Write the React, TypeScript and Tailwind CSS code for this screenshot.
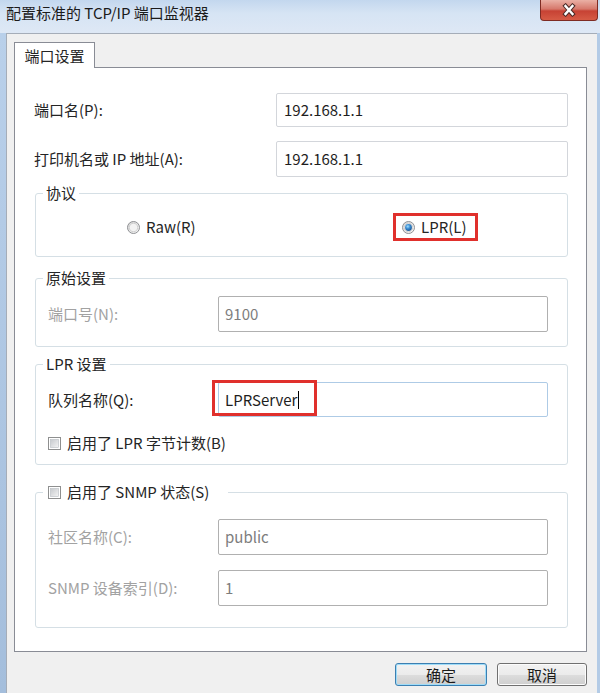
import React from 'react';

type Tone = 'normal' | 'disabled' | 'focus';

const Radio: React.FC<{ checked?: boolean; id: string }> = ({ checked, id }) => (
  <svg width="13" height="13" viewBox="0 0 13 13" className="shrink-0">
    <defs>
      <linearGradient id={`${id}-ring`} x1="0" y1="0" x2="1" y2="1">
        <stop offset="0" stopColor="#d4d4d4" />
        <stop offset="1" stopColor="#fafafa" />
      </linearGradient>
      <radialGradient id={`${id}-dot`} cx="0.4" cy="0.35" r="0.7">
        <stop offset="0" stopColor="#9fe0ff" />
        <stop offset="0.45" stopColor="#3d8fd4" />
        <stop offset="1" stopColor="#16508f" />
      </radialGradient>
    </defs>
    <circle cx="6.5" cy="6.5" r="6" fill={`url(#${id}-ring)`} stroke="#8f9194" />
    <circle cx="6.5" cy="6.5" r="4.2" fill="#f3f3f3" stroke="#c9c9c9" strokeWidth="0.8" />
    {checked && <circle cx="6.5" cy="6.5" r="3.4" fill={`url(#${id}-dot)`} />}
  </svg>
);

const Checkbox: React.FC<{ id: string }> = ({ id }) => (
  <svg width="13" height="13" viewBox="0 0 13 13" className="shrink-0">
    <defs>
      <linearGradient id={id} x1="0" y1="0" x2="1" y2="1">
        <stop offset="0" stopColor="#c6c9cd" />
        <stop offset="1" stopColor="#f4f4f4" />
      </linearGradient>
    </defs>
    <rect x="0.5" y="0.5" width="12" height="12" fill="#ffffff" stroke="#8e8f8f" />
    <rect x="2.5" y="2.5" width="8" height="8" fill={`url(#${id})`} stroke="#b8bcc2" strokeWidth="0.6" />
  </svg>
);

const TextBox: React.FC<{ value: string; tone?: Tone; className: string; children?: React.ReactNode }> = ({
  value,
  tone = 'normal',
  className,
  children,
}) => {
  const border =
    tone === 'disabled' ? 'border-[#b0b0b0]' : tone === 'focus' ? 'border-[#aecbe6]' : 'border-[#d3d6db]';
  const color = tone === 'disabled' ? 'text-[#7d7d7d]' : 'text-[#1e1e1e]';
  return (
    <div className={`relative flex items-center rounded-[2px] border bg-white ${border} ${className}`}>
      <span className={`text-[15px] leading-[20px] ${color}`}>{value}</span>
      {children}
    </div>
  );
};

export default function App() {
  return (
    <div className="flex h-[693px] w-[600px] flex-col overflow-hidden bg-[#b7cfe9] font-['Noto_Sans_CJK_SC','Noto_Sans',sans-serif] text-[15px] leading-[20px] text-[#252525]">
      {/* title bar */}
      <div className="flex h-[33px] shrink-0 items-start justify-between bg-[linear-gradient(180deg,#c3d7ee_0%,#d6e4f4_40%,#dee8f5_100%)]">
        <span className="pl-[6px] pt-[3px] text-[#1b1b1b]">配置标准的 TCP/IP 端口监视器</span>
        <div className="mr-[2px] flex h-[21px] w-[58px] items-center justify-center rounded-b-[4px] border border-t-0 border-[#7e2b23] bg-[linear-gradient(180deg,#eab0a5_0%,#d6786b_45%,#c74234_55%,#d65b45_100%)]">
          <svg width="16" height="14" viewBox="0 0 16 14">
            <path d="M4.5 3 L11.5 11 M11.5 3 L4.5 11" stroke="#4a2a26" strokeWidth="4.4" strokeLinecap="square" />
            <path d="M4.5 3 L11.5 11 M11.5 3 L4.5 11" stroke="#ffffff" strokeWidth="2.4" strokeLinecap="square" />
          </svg>
        </div>
      </div>

      <div className="flex flex-1">
        {/* left frame */}
        <div className="w-[6px] bg-[linear-gradient(180deg,#b9d0ea,#a4bedc)]" />
        {/* client area */}
        <div className="flex flex-1 flex-col border-l border-t border-[#a5adb8] bg-[#f0f0f0] pl-[7px] pr-[10px] pt-[8px]">
          <div className="relative z-10 -mb-px flex h-[26px] w-[81px] items-center justify-center border border-b-0 border-[#898c95] bg-white">
            端口设置
          </div>
          <div className="flex h-[585px] flex-col border border-[#898c95] bg-white pt-[25px]">
            <div className="flex h-[34px] items-center justify-between pl-[19px] pr-[18px]">
              <span>端口名(P):</span>
              <TextBox value="192.168.1.1" className="h-[34px] w-[292px] pl-[7px]" />
            </div>
            <div className="mt-[14px] flex h-[36px] items-center justify-between pl-[19px] pr-[18px]">
              <span>打印机名或 IP 地址(A):</span>
              <TextBox value="192.168.1.1" className="h-[36px] w-[292px] pl-[7px]" />
            </div>

            <fieldset className="ml-[20px] mr-[18px] mt-[6px] rounded-[3px] border border-[#d5dfe5] pb-[19px] pt-[14px]">
              <legend className="ml-[7px] px-[3px]">协议</legend>
              <div className="flex h-[20px] items-center pl-[91px]">
                <div className="flex w-[266px] items-center gap-[6px]">
                  <Radio id="raw" />
                  <span>Raw(R)</span>
                </div>
                <div className="flex h-[28px] items-center gap-[6px] border-[3px] border-[#e0302c] pl-[6px] pr-[9px]">
                  <Radio id="lpr" checked />
                  <span>LPR(L)</span>
                </div>
              </div>
            </fieldset>

            <fieldset className="ml-[20px] mr-[18px] mt-[11px] rounded-[3px] border border-[#d5dfe5] pb-[14px] pt-[8px]">
              <legend className="ml-[7px] px-[3px]">原始设置</legend>
              <div className="flex h-[36px] items-center justify-between pl-[12px] pr-[19px]">
                <span className="text-[#a2a2a2]">端口号(N):</span>
                <TextBox value="9100" tone="disabled" className="h-[36px] w-[330px] pl-[6px]" />
              </div>
            </fieldset>

            <fieldset className="ml-[20px] mr-[18px] mt-[7px] rounded-[3px] border border-[#d5dfe5] pb-[11px] pt-[8px]">
              <legend className="ml-[7px] px-[3px]">LPR 设置</legend>
              <div className="flex h-[35px] items-center justify-between pl-[12px] pr-[19px]">
                <span>队列名称(Q):</span>
                <TextBox value="LPRServer" tone="focus" className="h-[35px] w-[330px] pl-[6px]">
                  <span className="ml-px h-[18px] w-px bg-black" />
                  <span className="absolute -left-[7px] -top-[3px] h-[36px] w-[105px] border-[3px] border-[#e0302c]" />
                </TextBox>
              </div>
              <div className="mt-[16px] flex h-[20px] items-center gap-[6px] pl-[12px]">
                <Checkbox id="cb-lpr" />
                <span>启用了 LPR 字节计数(B)</span>
              </div>
            </fieldset>

            <fieldset className="ml-[20px] mr-[18px] mt-[17px] rounded-[3px] border border-[#d5dfe5] pb-[21px] pt-[17px]">
              <legend className="ml-[7px] flex items-center gap-[6px] pl-[5px] pr-[19px]">
                <Checkbox id="cb-snmp" />
                <span>启用了 SNMP 状态(S)</span>
              </legend>
              <div className="flex h-[36px] items-center justify-between pl-[12px] pr-[19px]">
                <span className="text-[#a2a2a2]">社区名称(C):</span>
                <TextBox value="public" tone="disabled" className="h-[36px] w-[330px] pl-[6px]" />
              </div>
              <div className="mt-[15px] flex h-[36px] items-center justify-between pl-[12px] pr-[19px]">
                <span className="text-[#a2a2a2]">SNMP 设备索引(D):</span>
                <TextBox value="1" tone="disabled" className="h-[36px] w-[330px] pl-[6px]" />
              </div>
            </fieldset>
          </div>

          <div className="mt-[11px] flex justify-end gap-[10px]">
            <button className="flex h-[23px] w-[92px] items-center justify-center rounded-[3px] border border-[#3c7fb1] bg-[linear-gradient(180deg,#f2f2f2_0%,#ebebeb_50%,#dddddd_50%,#cfcfcf_100%)] text-[#1b1b1b] shadow-[inset_0_0_0_1px_#9fdcf8]">
              确定
            </button>
            <button className="flex h-[23px] w-[90px] items-center justify-center rounded-[3px] border border-[#707070] bg-[linear-gradient(180deg,#f2f2f2_0%,#ebebeb_50%,#dddddd_50%,#cfcfcf_100%)] text-[#1b1b1b] shadow-[inset_0_0_0_1px_#fcfcfc]">
              取消
            </button>
          </div>
        </div>
        {/* right frame */}
        <div className="w-[3px] bg-[#b3cbe6]" />
      </div>
    </div>
  );
}
